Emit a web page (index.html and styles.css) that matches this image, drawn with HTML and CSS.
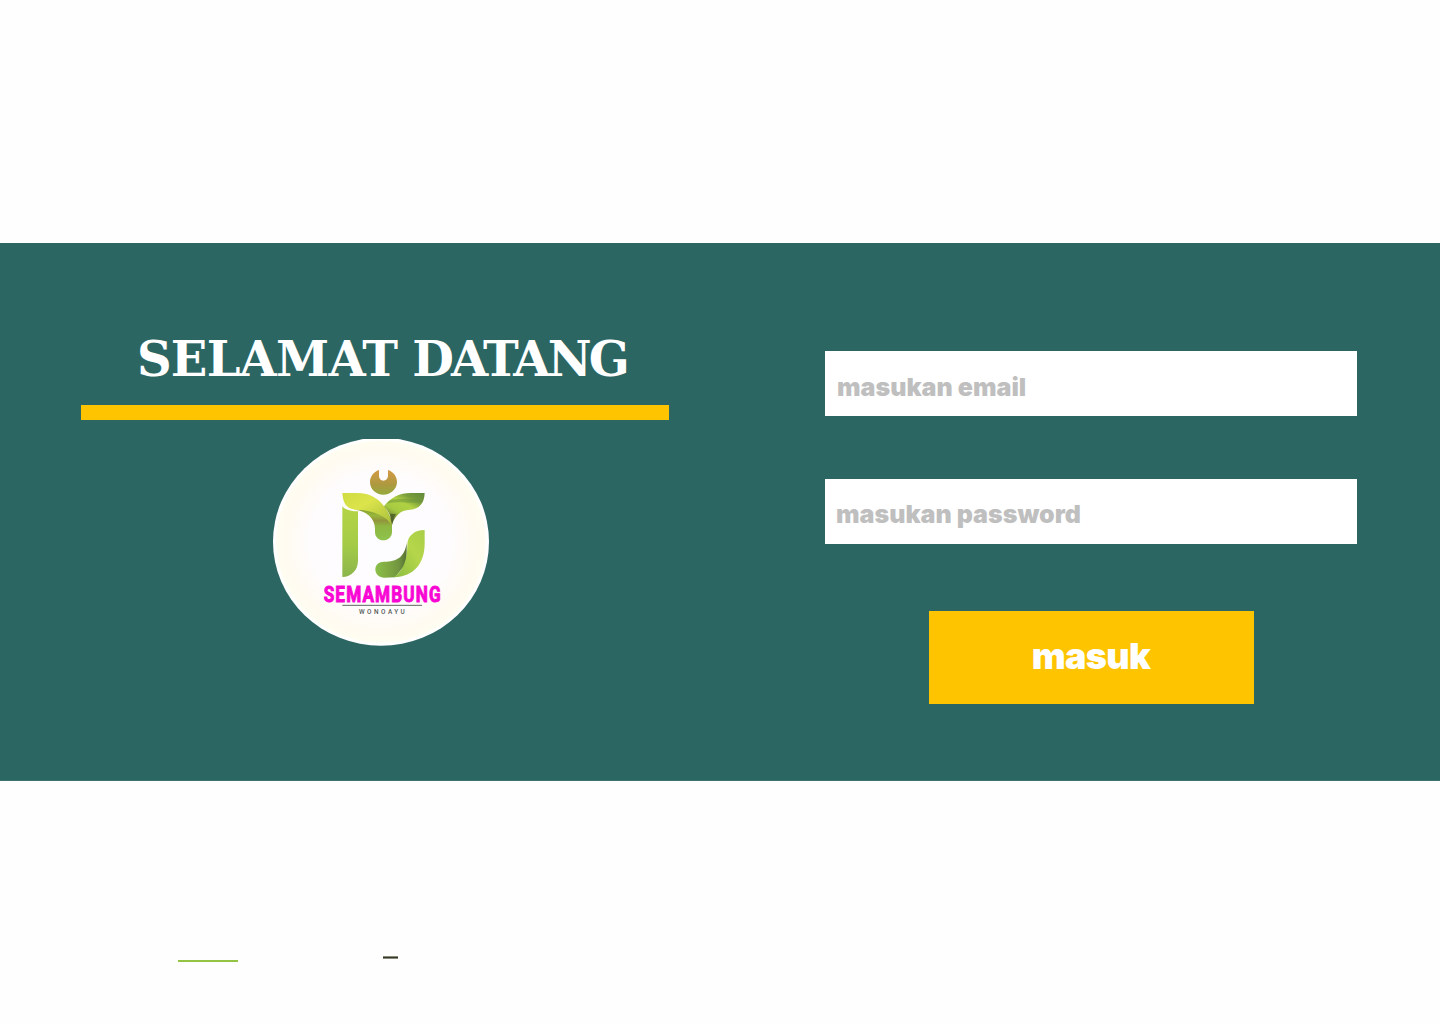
FILE: index.html
```html
<!DOCTYPE html>
<html lang="id">
<head>
<meta charset="utf-8">
<title>Selamat Datang</title>
<link rel="stylesheet" href="styles.css">
</head>
<body>
<main class="login">
  <section class="welcome">
    <h1 class="title"><span class="title-wide">SELAMAT</span> <span class="title-tight">DATANG</span></h1>
    <div class="rule"></div>
    <svg class="logo" viewBox="39 27 648 621" role="img" aria-label="Semambung Wonoayu">
      <defs>
        <radialGradient id="disc"><stop offset="0" stop-color="#fdfcff"/><stop offset=".65" stop-color="#fefcfd"/><stop offset=".88" stop-color="#fffbf1"/><stop offset=".96" stop-color="#fffcf0"/><stop offset=".98" stop-color="#fff"/></radialGradient>
        <linearGradient id="head" x2="0" y2="1"><stop offset="0" stop-color="#d49a43"/><stop offset=".6" stop-color="#ad9940"/><stop offset="1" stop-color="#94ab3d"/></linearGradient>
        <linearGradient id="stem" x2="0" y2="1"><stop offset="0" stop-color="#b5d445"/><stop offset=".55" stop-color="#a4cb47"/><stop offset="1" stop-color="#8bb54b"/></linearGradient>
        <linearGradient id="fold" x2="1" y2="1"><stop offset="0" stop-color="#d0dc42"/><stop offset=".4" stop-color="#dce44b"/><stop offset="1" stop-color="#a5bd3c"/></linearGradient>
        <linearGradient id="under" x2="0" y2="1"><stop offset="0" stop-color="#7f982e"/><stop offset=".28" stop-color="#98b63b"/><stop offset=".42" stop-color="#92943b"/><stop offset=".58" stop-color="#8eb741"/><stop offset="1" stop-color="#8dc34c"/></linearGradient>
        <linearGradient id="wing" x1="1" y1="0" x2=".3" y2="1"><stop offset="0" stop-color="#60883a"/><stop offset=".25" stop-color="#789d3a"/><stop offset=".45" stop-color="#b0d143"/><stop offset=".7" stop-color="#a6ca42"/><stop offset="1" stop-color="#586e30"/></linearGradient>
        <linearGradient id="foot"><stop offset="0" stop-color="#8bc04a"/><stop offset=".4" stop-color="#80a943"/><stop offset=".75" stop-color="#719540"/><stop offset="1" stop-color="#566f34"/></linearGradient>
        <linearGradient id="curl" x1="1" y1="0" x2="0" y2="1"><stop offset="0" stop-color="#a9ce48"/><stop offset=".4" stop-color="#b5d64a"/><stop offset="1" stop-color="#8bbd42"/></linearGradient>
      </defs>
      <ellipse cx="363" cy="335" rx="324" ry="312" fill="url(#disc)"/>
      <path fill="url(#head)" d="M357 120C340 126 330 140 330 156C330 178 348 194 370 194S411 177 411 156C411 140 401 126 384 120V138C384 146 378 152 370 152S357 146 357 138Z"/>
      <path fill="url(#stem)" d="M247 229C256 240 274 244 294 244V392C294 420 274 440 247 441Z"/>
      <path fill="url(#under)" d="M286 239C318 242 345 265 345 296V306C345 321 356 331 370 331S396 321 396 306V270L374 229Z"/>
      <path fill="url(#wing)" d="M372 229C391 202 420 189 452 189H494C493 220 477 238 450 239C420 240 403 260 396 285C396 264 385 242 372 229Z"/>
      <path fill="#6b9339" opacity=".5" d="M388 212C412 204 440 208 490 209L486 217C445 222 415 212 380 221Z"/>
      <path fill="#455728" opacity=".75" d="M390 251L408 252C403 259 399 269 396 285Z"/>
      <path fill="url(#fold)" d="M247 189H292C342 190 382 217 396 287C380 257 338 240 286 239C260 236 249 222 247 189Z"/>
      <path fill="url(#foot)" d="M372 395C411 394 434 382 440 338V399L405 442L373 443C357 443 346 432 346 418S357 395 372 395Z"/>
      <path fill="url(#curl)" d="M494 300V343C493 399 464 440 401 442C431 423 442 387 442 345C442 318 463 300 494 300Z"/>
      <text class="brand" transform="translate(191 516) scale(.78 1)" textLength="450" lengthAdjust="spacing">SEMAMBUNG</text>
      <path d="M247 526H486" stroke="#60675f" stroke-width="3"/>
      <text class="place" transform="translate(297 551) scale(.8 1)" textLength="171" lengthAdjust="spacing">WONOAYU</text>
    </svg>
  </section>
  <form class="form">
    <input class="field" type="email" placeholder="masukan email" aria-label="Email">
    <input class="field field-password" type="password" placeholder="masukan password" aria-label="Password">
    <button class="submit" type="button">masuk</button>
  </form>
</main>
<footer class="marks"><span class="mark-green"></span><span class="mark-dark"></span></footer>
</body>
</html>
```
FILE: styles.css
```css
* { box-sizing: border-box; }
body { margin: 0; height: 1024px; padding-top: 243px; background: #fefefe; font-family: Inter, sans-serif; overflow: hidden; }
.login { display: flex; height: 538px; background: #2c6663; border-bottom: 1px solid #3d7270; }
.welcome { display: flex; flex-direction: column; width: 825px; padding: 86px 0 0 81px; }
.title { width: 588px; height: 60px; margin: 0 0 16px; padding-left: 56px; color: #fff; font: bold 48px/60px "DejaVu Serif", serif; letter-spacing: -1.6px; white-space: nowrap; }
.title-wide { letter-spacing: -.8px; }
.title-tight { letter-spacing: -2.8px; }
.rule { width: 588px; height: 15px; background: #ffc400; }
.logo { width: 216px; height: 207px; margin: 19px 0 0 192px; }
.brand { fill: #f807d4; stroke: #f807d4; stroke-width: 3px; font: bold 66px "Roboto", sans-serif; }
.place { fill: #555b58; font: 500 24px "Roboto", sans-serif; }
.form { display: flex; flex-direction: column; width: 532px; padding-top: 108px; }
.field { width: 532px; height: 65px; margin: 0 0 63px; padding: 7px 12px 0; border: 0; border-radius: 0; background: #fff; color: #555; font: 900 25px/30px Inter, sans-serif; outline: 0; }
.field::placeholder { color: #bfbfbf; opacity: 1; }
.field-password { margin-bottom: 67px; padding: 5px 11px 0; }
.submit { align-self: center; width: 325px; height: 93px; padding: 0 0 3px; border: 0; background: #ffc400; color: #fff; font: 900 36px/44px Inter, sans-serif; letter-spacing: -.7px; }
.marks { display: flex; align-items: flex-start; padding: 175px 0 0 178px; }
.mark-green { width: 60px; height: 2px; margin: 4px 145px 0 0; background: #94c443; }
.mark-dark { width: 15px; height: 3px; border: solid #898c7b; border-width: 1px 0; background: #363928; }
```
